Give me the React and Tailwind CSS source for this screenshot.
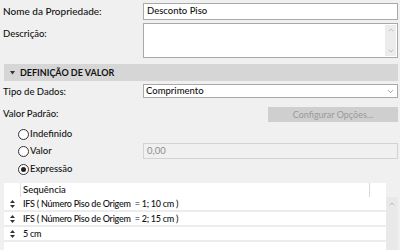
import { ChevronDown, ChevronUp } from 'lucide-react';

const SortGrip = () => (
  <svg width="5" height="8" viewBox="0 0 5 8" className="shrink-0">
    <path d="M0 3 L2.5 0 L5 3 Z" fill="#333" />
    <path d="M0 5 L2.5 8 L5 5 Z" fill="#333" />
  </svg>
);

const Radio = ({ checked, label }) => (
  <div className="flex items-center gap-[1px]">
    <span className="flex h-[11px] w-[11px] items-center justify-center rounded-full border border-[#333] bg-white">
      {checked && <span className="h-[5px] w-[5px] rounded-full bg-[#222]" />}
    </span>
    <span>{label}</span>
  </div>
);

const rows = [
  'IFS ( Número Piso de Origem  = 1; 10 cm )',
  'IFS ( Número Piso de Origem  = 2; 15 cm )',
  '5 cm',
];

export default function App() {
  return (
    <div
      className="relative h-[250px] w-[400px] overflow-hidden bg-[#f0f0f0] text-[9.5px] font-medium text-[#111]"
      style={{ fontFamily: 'Lato, "Open Sans", sans-serif' }}
    >
      <div className="flex h-[17px] items-center pt-[3px] box-content">
        <div className="w-[143px] pl-[3px] text-[10px]">Nome da Propriedade:</div>
        <div className="mr-[2px] flex h-[17px] flex-1 items-center border border-[#a9a9a9] bg-white pl-[3px]">
          Desconto Piso
        </div>
      </div>

      <div className="mt-[3px] flex h-[35px]">
        <div className="w-[143px] pl-[3px] pt-[4px]">Descrição:</div>
        <div className="mr-[2px] flex flex-1 justify-end border border-[#a9a9a9] bg-white p-[1px]">
          <div className="flex w-[11px] flex-col items-center justify-between bg-[#ececec] py-[1px] text-[#a8a8a8]">
            <ChevronUp size={8} strokeWidth={2} />
            <ChevronDown size={8} strokeWidth={2} />
          </div>
        </div>
      </div>

      <div className="ml-[4px] mr-[2px] mt-[6px] flex h-[17px] items-center gap-[5px] bg-[#d6d6d6] pl-[6px] text-[9px] font-bold">
        <svg width="5" height="4" viewBox="0 0 5 4">
          <path d="M0 0 L5 0 L2.5 3.5 Z" fill="#333" />
        </svg>
        <span>DEFINIÇÃO DE VALOR</span>
      </div>

      <div className="mt-[3px] flex h-[14px] items-center">
        <div className="w-[143px] pl-[3px] pt-[3px]">Tipo de Dados:</div>
        <div className="mr-[2px] flex h-[14px] flex-1 items-center justify-between border border-[#a9a9a9] bg-white pl-[2px] pr-[2px]">
          <span>Comprimento</span>
          <ChevronDown size={9} strokeWidth={1.5} className="text-[#555]" />
        </div>
      </div>

      <div className="mt-[9px] flex h-[15px] items-center justify-between">
        <div className="pl-[3px]">Valor Padrão:</div>
        <div className="mr-[2px] flex h-[15px] w-[130px] items-center justify-center bg-[#cfcfcf] text-[9px] font-normal text-[#9a9a9a]">
          Configurar Opções...
        </div>
      </div>

      <div className="mt-[4px] flex h-[16px] items-center pl-[18px]">
        <Radio label="Indefinido" />
      </div>

      <div className="mt-[1px] flex h-[16px] items-center">
        <div className="w-[143px] pl-[18px]">
          <Radio label="Valor" />
        </div>
        <div className="mr-[2px] flex h-[16px] flex-1 items-center border border-[#d3d3d3] bg-[#f0f0f0] pl-[3px] font-normal text-[#8c8c8c]">
          0,00
        </div>
      </div>

      <div className="mt-[2px] flex h-[16px] items-center pl-[18px]">
        <Radio checked label="Expressão" />
      </div>

      <div className="ml-[4px] mr-[2px] mt-[6px] flex">
        <div className="flex flex-1 flex-col">
          <div className="flex h-[14px] items-center bg-white">
            <div className="h-full w-[17px] border-r border-[#e2e2e2]" />
            <div className="flex-1 pl-[2px]">Sequência</div>
            <div className="h-full w-[17px] border-l border-[#d8d8d8]" />
          </div>
          {rows.map((row) => (
            <div key={row} className="flex h-[13px] items-center gap-[8px] border-b-2 border-[#ececec] bg-white pl-[6px] text-[9px] tracking-[-0.25px] box-content">
              <SortGrip />
              <span className="whitespace-pre">{row}</span>
            </div>
          ))}
          <div className="h-[12px] bg-white" />
        </div>
        <div className="flex w-[12px] flex-col">
          <div className="h-[14px]" />
          <div className="flex flex-1 justify-center bg-[#e9e9e9] pt-[3px] text-[#9c9c9c]">
            <ChevronUp size={8} strokeWidth={2} />
          </div>
        </div>
      </div>
    </div>
  );
}
